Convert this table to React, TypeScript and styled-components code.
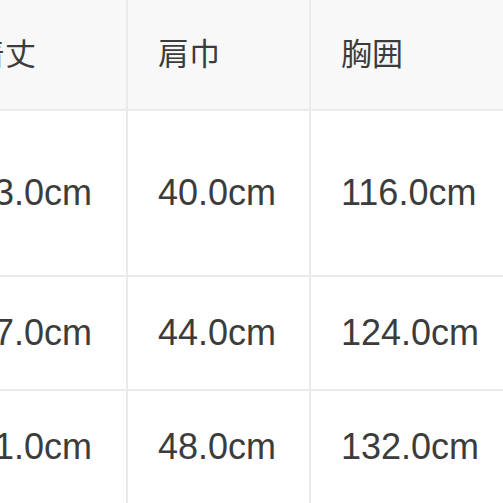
import React from 'react'
import styled, { createGlobalStyle } from 'styled-components'

const GlobalStyle = createGlobalStyle`
  html, body {
    margin: 0;
    padding: 0;
    background: #ffffff;
    overflow: hidden;
  }
`

const Frame = styled.div`
  width: 503px;
  height: 503px;
  overflow: hidden;
  background: #ffffff;
`

const SizeTable = styled.table`
  width: 606px;
  margin-left: -56px;
  border-collapse: collapse;
  table-layout: fixed;
  font-family: "Liberation Sans", "Noto Sans CJK JP", sans-serif;
  color: #3c3c3c;
`

const HeadCell = styled.th<{ $w: number }>`
  width: ${p => p.$w}px;
  height: 110px;
  padding: 0 0 6px 30px;
  box-sizing: border-box;
  text-align: left;
  font-family: "Noto Sans CJK JP", sans-serif;
  font-weight: 400;
  font-size: 31px;
  background: #f8f8f8;
  border-right: 2px solid #ebebeb;
  border-bottom: 2px solid #ebebeb;
`

const Cell = styled.td<{ $h: number }>`
  height: ${p => p.$h}px;
  padding: 0 0 0 30px;
  box-sizing: border-box;
  font-size: 36px;
  background: #ffffff;
  border-right: 2px solid #ebebeb;
  border-bottom: 2px solid #ebebeb;
`

const heads = [
  { label: '着丈', w: 183 },
  { label: '肩巾', w: 183 },
  { label: '胸囲', w: 240 },
]
const rows = [
  { h: 166, vals: ['63.0cm', '40.0cm', '116.0cm'] },
  { h: 114, vals: ['67.0cm', '44.0cm', '124.0cm'] },
  { h: 114, vals: ['71.0cm', '48.0cm', '132.0cm'] },
]

export default function App() {
  return (
    <>
      <GlobalStyle />
      <Frame>
        <SizeTable>
          <thead>
            <tr>
              {heads.map(h => (
                <HeadCell key={h.label} $w={h.w}>{h.label}</HeadCell>
              ))}
            </tr>
          </thead>
          <tbody>
            {rows.map((r, i) => (
              <tr key={i}>
                {r.vals.map(v => (
                  <Cell key={v} $h={r.h}>{v}</Cell>
                ))}
              </tr>
            ))}
          </tbody>
        </SizeTable>
      </Frame>
    </>
  )
}
